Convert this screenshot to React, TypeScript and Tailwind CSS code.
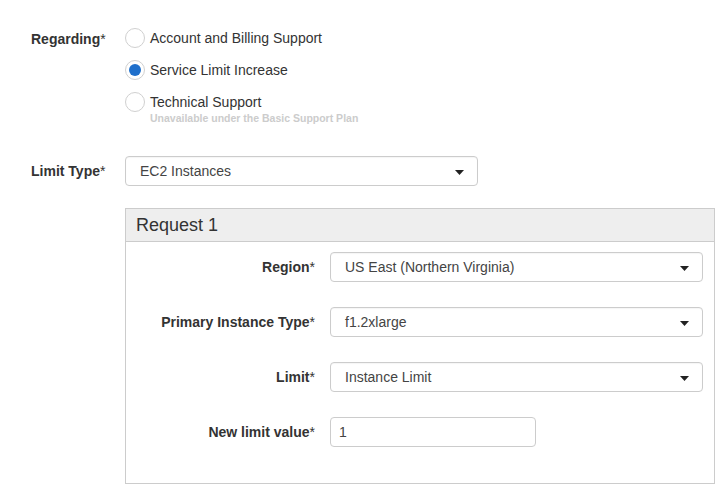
import React, { useState } from "react";

const Caret = () => (
  <svg width="9" height="5" viewBox="0 0 9 5" className="absolute right-[13px] top-[13px]">
    <path d="M0 0 L9 0 L4.5 5 Z" fill="#222" />
  </svg>
);

const Select = ({ value, width }: { value: string; width: string }) => (
  <div
    className={`relative h-[30px] ${width} rounded-[4px] border border-[#cccccc] bg-white pl-[14px] text-[14px] leading-[28px] text-[#444] shadow-[inset_0_1px_1px_rgba(0,0,0,0.04)]`}
  >
    {value}
    <Caret />
  </div>
);

const Radio = ({ checked }: { checked: boolean }) => (
  <div className="flex h-[20px] w-[20px] items-center justify-center rounded-full border border-[#d0d0d0] bg-white">
    {checked && <div className="h-[12px] w-[12px] rounded-full bg-[#1f6fcb]" />}
  </div>
);

const App = () => {
  const [regarding, setRegarding] = useState("limit");

  const options = [
    { id: "billing", label: "Account and Billing Support" },
    { id: "limit", label: "Service Limit Increase" },
    { id: "tech", label: "Technical Support", note: "Unavailable under the Basic Support Plan" },
  ];

  const rows = [
    { label: "Region", value: "US East (Northern Virginia)" },
    { label: "Primary Instance Type", value: "f1.2xlarge" },
    { label: "Limit", value: "Instance Limit" },
  ];

  return (
    <div
      className="min-h-[500px] bg-white pl-[31px] pt-[28px] text-[14px] text-[#333]"
      style={{ fontFamily: '"Liberation Sans", Arial, sans-serif' }}
    >
      {/* Regarding */}
      <div className="flex">
        <div className="w-[94px] pt-[1px] font-bold leading-[20px]">
          Regarding<span className="font-normal">*</span>
        </div>
        <div className="flex flex-col">
          {options.map((o) => (
            <div key={o.id} className="h-[32px]">
              <div
                className="flex cursor-pointer items-center"
                onClick={() => o.id !== "tech" && setRegarding(o.id)}
              >
                <Radio checked={regarding === o.id} />
                <span className="ml-[5px] leading-[20px]">{o.label}</span>
              </div>
              {o.note && (
                <div className="ml-[25px] text-[10.5px] font-bold leading-[12px] text-[#cccccc]">
                  {o.note}
                </div>
              )}
            </div>
          ))}
        </div>
      </div>

      {/* Limit Type */}
      <div className="mt-[32px] flex items-center">
        <div className="w-[94px] font-bold">
          Limit Type<span className="font-normal">*</span>
        </div>
        <Select value="EC2 Instances" width="w-[353px]" />
      </div>

      {/* Request panel */}
      <div className="ml-[94px] mt-[22px] w-[590px] border border-[#cccccc]">
        <div className="h-[33px] border-b border-[#cccccc] bg-[#eeeeee] pl-[10px] text-[18px] leading-[32px] text-[#333]">
          Request 1
        </div>
        <div className="flex flex-col gap-[25px] pb-[36px] pt-[10px]">
          {rows.map((r) => (
            <div key={r.label} className="flex items-center">
              <div className="w-[204px] pr-[15px] text-right font-bold">
                {r.label}
                <span className="font-normal">*</span>
              </div>
              <Select value={r.value} width="w-[373px]" />
            </div>
          ))}
          <div className="flex items-center">
            <div className="w-[204px] pr-[15px] text-right font-bold">
              New limit value<span className="font-normal">*</span>
            </div>
            <div className="h-[30px] w-[206px] rounded-[4px] border border-[#cccccc] pl-[8px] text-[14px] leading-[28px] text-[#444]">
              1
            </div>
          </div>
        </div>
      </div>
    </div>
  );
};

export default App;
